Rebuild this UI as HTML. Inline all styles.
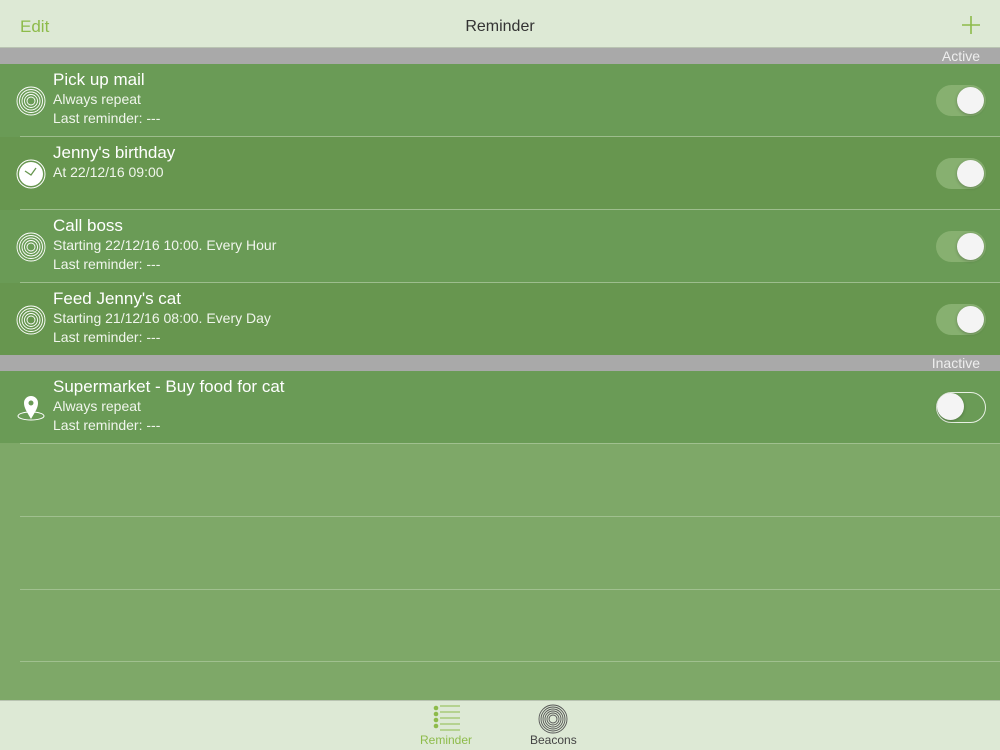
<!DOCTYPE html>
<html><head><meta charset="utf-8"><style>
*{margin:0;padding:0;box-sizing:border-box}
body{width:1000px;height:750px;overflow:hidden;background:#7ea868;font-family:"Liberation Sans",sans-serif;position:relative}
.nav{position:absolute;top:0;left:0;width:1000px;height:48px;background:#dde9d5;border-bottom:1px solid #b9c4b2}
.nav .e{position:absolute;left:20px;top:17px;font-size:17px;color:#8dbb4a}
.nav .t{position:absolute;left:0;width:1000px;text-align:center;top:18px;font-size:16px;color:#333}
.sec{position:absolute;left:0;width:1000px;height:16px;background:#a9a9a9;color:#eee;font-size:14px;text-align:right;padding-right:20px;line-height:16px}
.row{position:absolute;left:0;width:1000px;height:73px;background:#6a9b56}
.row.b{background:#67964f}
.row .sep{position:absolute;left:20px;right:0;bottom:0;height:1px;background:#9dbd8d}
.row .h{position:absolute;left:53px;top:6px;font-size:17px;color:#fff}
.row .s{position:absolute;left:53px;font-size:14px;color:#f0f5ec}
.ic{position:absolute;left:16px;top:22px}
.tg{position:absolute;left:936px;top:21px;width:50px;height:31px;border-radius:16px;background:#87b070}
.tg.off{background:transparent;border:1.5px solid #e8f0e4}
.tg i{position:absolute;right:2px;top:2px;width:27px;height:27px;border-radius:50%;background:#f4f4f4;box-shadow:0 1px 3px rgba(0,0,0,.25)}
.tg.off i{left:0;top:0;right:auto}
.ln{position:absolute;left:20px;right:0;height:1px;background:#a0c08f}
.tab{position:absolute;top:700px;left:0;width:1000px;height:50px;background:#dde9d5;border-top:1px solid #b9c4b2}
.tab span{position:absolute;top:32px;font-size:12px}
</style></head><body>
<div class="nav"><div class="e">Edit</div><div class="t">Reminder</div>
<svg style="position:absolute;left:962px;top:16px" width="18" height="18"><path d="M9 0V18M0 9H18" stroke="#8dbb4a" stroke-width="1.6"/></svg></div>
<div class="sec" style="top:48px">Active</div>

<div class="row" style="top:64px">
<svg class="ic" width="30" height="30"><g fill="none" stroke="#fff" stroke-width="0.9"><circle cx="15" cy="15" r="14"/><circle cx="15" cy="15" r="11.5"/><circle cx="15" cy="15" r="9"/><circle cx="15" cy="15" r="6.5"/><circle cx="15" cy="15" r="4"/></g></svg>
<div class="h">Pick up mail</div><div class="s" style="top:27px">Always repeat</div><div class="s" style="top:46px">Last reminder: ---</div>
<div class="tg"><i></i></div><div class="sep"></div></div>

<div class="row b" style="top:137px">
<svg class="ic" width="30" height="30"><circle cx="15" cy="15" r="14" fill="none" stroke="#fff" stroke-width="1"/><circle cx="15" cy="15" r="12" fill="#fff"/><path d="M9 12L15 16L20 9" fill="none" stroke="#67964f" stroke-width="1.3"/></svg>
<div class="h">Jenny's birthday</div><div class="s" style="top:27px">At 22/12/16 09:00</div>
<div class="tg"><i></i></div><div class="sep"></div></div>

<div class="row" style="top:210px">
<svg class="ic" width="30" height="30"><g fill="none" stroke="#fff" stroke-width="0.9"><circle cx="15" cy="15" r="14"/><circle cx="15" cy="15" r="11.5"/><circle cx="15" cy="15" r="9"/><circle cx="15" cy="15" r="6.5"/><circle cx="15" cy="15" r="4"/></g></svg>
<div class="h">Call boss</div><div class="s" style="top:27px">Starting 22/12/16 10:00. Every Hour</div><div class="s" style="top:46px">Last reminder: ---</div>
<div class="tg"><i></i></div><div class="sep"></div></div>

<div class="row b" style="top:283px;height:72px">
<svg class="ic" width="30" height="30"><g fill="none" stroke="#fff" stroke-width="0.9"><circle cx="15" cy="15" r="14"/><circle cx="15" cy="15" r="11.5"/><circle cx="15" cy="15" r="9"/><circle cx="15" cy="15" r="6.5"/><circle cx="15" cy="15" r="4"/></g></svg>
<div class="h">Feed Jenny's cat</div><div class="s" style="top:27px">Starting 21/12/16 08:00. Every Day</div><div class="s" style="top:46px">Last reminder: ---</div>
<div class="tg"><i></i></div></div>

<div class="sec" style="top:355px">Inactive</div>
<div class="row" style="top:371px;height:72px">
<svg class="ic" width="30" height="32" style="top:20px"><ellipse cx="15" cy="25" rx="13" ry="4" fill="none" stroke="#fff"/><path d="M15 28C11 21 8 17 8 12A7 7 0 0 1 22 12C22 17 19 21 15 28Z" fill="#fff"/><circle cx="15" cy="12" r="2.5" fill="#6a9b56"/></svg>
<div class="h">Supermarket - Buy food for cat</div><div class="s" style="top:27px">Always repeat</div><div class="s" style="top:46px">Last reminder: ---</div>
<div class="tg off"><i></i></div></div>
<div class="ln" style="top:443px"></div>
<div class="ln" style="top:516px"></div>
<div class="ln" style="top:589px"></div>
<div class="ln" style="top:661px"></div>

<div class="tab">
<svg style="position:absolute;left:432px;top:4px" width="30" height="26"><g fill="#8dbb4a"><circle cx="4" cy="3" r="2.3"/><circle cx="4" cy="9" r="2.3"/><circle cx="4" cy="15" r="2.3"/><circle cx="4" cy="21" r="2.3"/></g><g stroke="#8dbb4a" stroke-width="1"><path d="M8 1H28M8 7H28M8 13H28M8 19H28M8 25H28"/></g></svg>
<span style="left:420px;color:#8dbb4a">Reminder</span>
<svg style="position:absolute;left:538px;top:3px" width="30" height="30"><g fill="none" stroke="#555" stroke-width="0.9"><circle cx="15" cy="15" r="14"/><circle cx="15" cy="15" r="12"/><circle cx="15" cy="15" r="10"/><circle cx="15" cy="15" r="8"/><circle cx="15" cy="15" r="6"/><circle cx="15" cy="15" r="4"/></g></svg>
<span style="left:530px;color:#444">Beacons</span>
</div>
</body></html>
